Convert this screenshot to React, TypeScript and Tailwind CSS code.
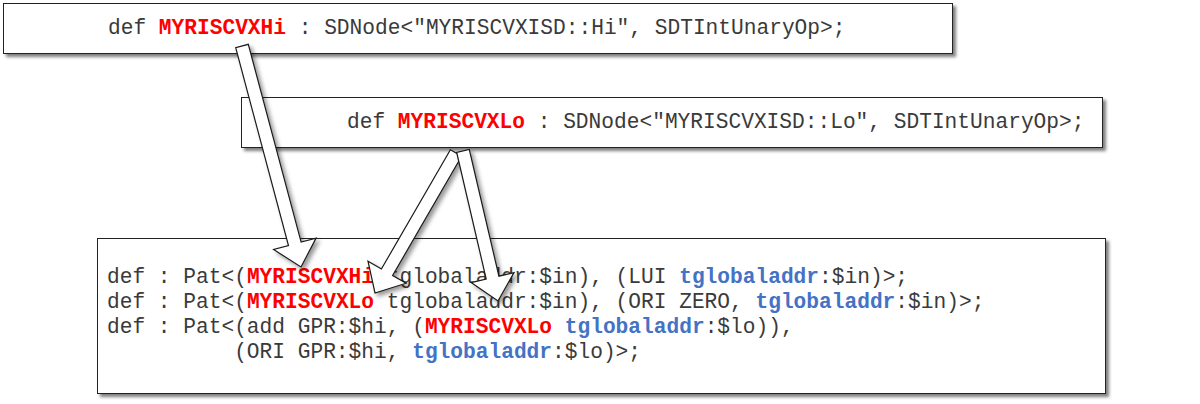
import React from "react";

type Pt = [number, number];

// block arrow polygon from tail centre to tip
const arrowPoints = (tail: Pt, tip: Pt, shaft = 6.5, head = 22, headLen = 24) => {
  const dx = tip[0] - tail[0];
  const dy = tip[1] - tail[1];
  const len = Math.hypot(dx, dy);
  const ux = dx / len;
  const uy = dy / len;
  const nx = -uy;
  const ny = ux;
  const bx = tip[0] - ux * headLen;
  const by = tip[1] - uy * headLen;
  const pts: Pt[] = [
    [tail[0] + nx * shaft, tail[1] + ny * shaft],
    [bx + nx * shaft, by + ny * shaft],
    [bx + nx * head, by + ny * head],
    tip,
    [bx - nx * head, by - ny * head],
    [bx - nx * shaft, by - ny * shaft],
    [tail[0] - nx * shaft, tail[1] - ny * shaft],
  ];
  return pts.map((p) => `${p[0].toFixed(1)},${p[1].toFixed(1)}`).join(" ");
};

const arrows: { tail: Pt; tip: Pt }[] = [
  { tail: [242, 46], tip: [301, 267] },
  { tail: [456, 153], tip: [375, 293] },
  { tail: [463, 151], tip: [498, 301] },
];

const Red = ({ children }: { children: React.ReactNode }) => (
  <span className="font-bold text-[#ff0000]">{children}</span>
);

const Blue = ({ children }: { children: React.ReactNode }) => (
  <span className="font-bold text-[#4472c4]">{children}</span>
);

export default function App() {
  return (
    <div className="relative w-[1200px] h-[404px] bg-white overflow-hidden font-['Liberation_Mono',monospace] text-[21.2px] text-[#3a3a3a]">
      <div className="flex flex-col items-start pt-[3px]">
        {/* SDNode Hi */}
        <div className="ml-[3px] w-[950px] h-[51px] flex items-center pl-[104px] border border-[#222] bg-white shadow-[3px_3px_3px_rgba(0,0,0,0.5)] whitespace-pre">
          def <Red>MYRISCVXHi</Red> : SDNode&lt;"MYRISCVXISD::Hi", SDTIntUnaryOp&gt;;
        </div>

        {/* SDNode Lo */}
        <div className="ml-[241px] mt-[43px] w-[862px] h-[51px] flex items-center pl-[105px] border border-[#222] bg-white shadow-[3px_3px_3px_rgba(0,0,0,0.5)] whitespace-pre">
          def <Red>MYRISCVXLo</Red> : SDNode&lt;"MYRISCVXISD::Lo", SDTIntUnaryOp&gt;;
        </div>

        {/* Patterns */}
        <div className="ml-[97px] mt-[90px] w-[1009px] h-[156px] pl-[9px] pt-[26px] border border-[#222] bg-white shadow-[3px_3px_3px_rgba(0,0,0,0.5)] whitespace-pre leading-[25px]">
          <div>
            def : Pat&lt;(<Red>MYRISCVXHi</Red> tglobaladdr:$in), (LUI <Blue>tglobaladdr</Blue>:$in)&gt;;
          </div>
          <div>
            def : Pat&lt;(<Red>MYRISCVXLo</Red> tglobaladdr:$in), (ORI ZERO, <Blue>tglobaladdr</Blue>:$in)&gt;;
          </div>
          <div>
            def : Pat&lt;(add GPR:$hi, (<Red>MYRISCVXLo</Red> <Blue>tglobaladdr</Blue>:$lo)),
          </div>
          <div>
            {"          "}(ORI GPR:$hi, <Blue>tglobaladdr</Blue>:$lo)&gt;;
          </div>
        </div>
      </div>

      {/* arrows drawn over the boxes */}
      <svg className="absolute inset-0 pointer-events-none" width="1200" height="404" viewBox="0 0 1200 404">
        <defs>
          <filter id="arrowShadow" x="-20%" y="-20%" width="140%" height="140%">
            <feDropShadow dx="3" dy="3" stdDeviation="2" floodColor="#000" floodOpacity="0.4" />
          </filter>
        </defs>
        {arrows.map((a, i) => (
          <polygon
            key={i}
            points={arrowPoints(a.tail, a.tip)}
            fill="#ffffff"
            stroke="#1a1a1a"
            strokeWidth="1.2"
            strokeLinejoin="miter"
            filter="url(#arrowShadow)"
          />
        ))}
      </svg>
    </div>
  );
}
